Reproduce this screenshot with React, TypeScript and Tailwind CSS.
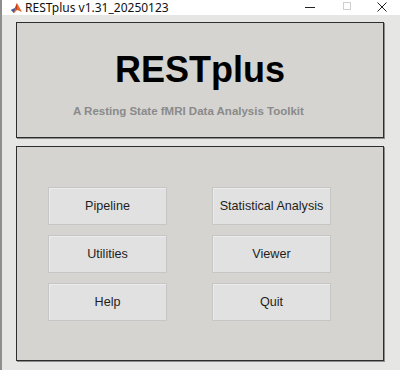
import React from "react";

const Btn = ({ label }: { label: string }) => (
  <div className="w-[119px] h-[38px] bg-[#e1e1e1] border border-[#c6c6c6] shadow-[inset_1px_1px_0_#ececec] flex items-center justify-center text-[12.6px] text-[#1e1e1e]">
    {label}
  </div>
);

export default function App() {
  return (
    <div
      className="w-[400px] h-[370px] bg-[#e6e6e4] flex flex-col border-l-2 border-[#8e8e8e] overflow-hidden"
      style={{ fontFamily: '"Liberation Sans", Arial, sans-serif' }}
    >
      <div className="h-[15px] bg-white flex items-center relative shrink-0">
        <svg width="11" height="10" viewBox="0 0 11 10" className="ml-[9px]">
          <polygon points="0,7 4,5 6,0 11,9 6,7 3,10" fill="#e8662a" />
          <polygon points="0,7 4,5 3,10" fill="#2a64b8" />
          <polygon points="6,0 4,5 6,7" fill="#c23a1a" />
        </svg>
        <span className="ml-[3px] text-[12px] text-[#111] leading-[15px]" style={{ fontFamily: '"Noto Sans", "Liberation Sans", sans-serif' }}>
          RESTplus v1.31_20250123
        </span>
        <div className="absolute left-[303px] top-[7px] w-[10px] h-px bg-[#222]" />
        <div className="absolute left-[341px] top-[2px] w-[8px] h-[8px] border border-[#cfcfcf]" />
        <svg width="10" height="10" viewBox="0 0 10 10" className="absolute left-[375px] top-[2px]">
          <path d="M0.5 0.5 L9.5 9.5 M9.5 0.5 L0.5 9.5" stroke="#222" strokeWidth="1" />
        </svg>
      </div>
      <div className="flex flex-col pt-[7px] pl-[14px] gap-[8px]">
        <div className="w-[368px] h-[116px] bg-[#d5d4d0] border border-[#2e2e2e] shadow-[1px_1px_0_#8c8c8c] flex flex-col">
          <div className="text-center text-[36px] font-bold text-black leading-none mt-[29px]">RESTplus</div>
          <div className="text-[11.5px] font-bold text-[#8a8a8a] leading-none mt-[18px] ml-[56px]">
            A Resting State fMRI Data Analysis Toolkit
          </div>
        </div>
        <div className="w-[368px] h-[215px] bg-[#d5d4d0] border border-[#2e2e2e] shadow-[1px_1px_0_#8c8c8c] flex pt-[40px] pl-[31px] gap-[45px]">
          <div className="flex flex-col gap-[10px]">
            <Btn label="Pipeline" />
            <Btn label="Utilities" />
            <Btn label="Help" />
          </div>
          <div className="flex flex-col gap-[10px]">
            <Btn label="Statistical Analysis" />
            <Btn label="Viewer" />
            <Btn label="Quit" />
          </div>
        </div>
      </div>
    </div>
  );
}
